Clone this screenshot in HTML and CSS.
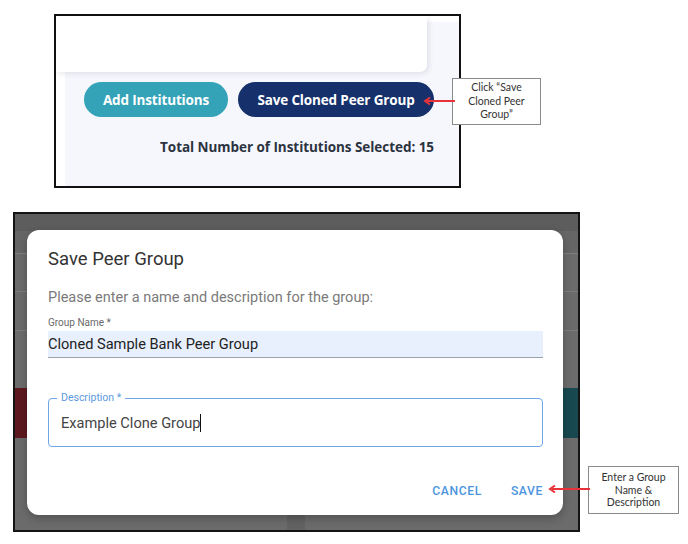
FILE: index.html
```html
<!DOCTYPE html>
<html>
<head>
<meta charset="utf-8">
<link rel="stylesheet" href="styles.css">
</head>
<body>
<div class="page">
  <div class="shot1">
    <div class="area">
      <div class="card"></div>
      <div class="btnrow">
        <div class="pill teal">Add Institutions</div>
        <div class="pill navy">Save Cloned Peer Group</div>
      </div>
      <div class="total">Total Number of Institutions Selected: 15</div>
    </div>
  </div>

  <div class="shot2">
    <div class="backdrop">
      <div class="band b1"></div>
      <div class="band b2"></div>
      <div class="band b3"></div>
      <div class="band b4"></div>
      <div class="band b5"></div>
      <div class="band b6"><div class="red"></div><div class="teal2"></div></div>
      <div class="band b7"><div class="chip"></div></div>
    </div>
    <div class="dialog">
      <div class="title">Save Peer Group</div>
      <div class="instr">Please enter a name and description for the group:</div>
      <div class="flabel">Group Name *</div>
      <div class="filled">Cloned Sample Bank Peer Group</div>
      <div class="outlined">
        <span class="olabel">Description *</span>
        <span class="otext">Example Clone Group</span><span class="caret"></span>
      </div>
      <div class="actions">
        <span class="tbtn">CANCEL</span>
        <span class="tbtn">SAVE</span>
      </div>
    </div>
  </div>

  <div class="callout c1">Click “Save<br>Cloned Peer<br>Group”</div>
  <svg class="arrow a1" width="32" height="10" viewBox="0 0 32 10"><line x1="4" y1="5" x2="32" y2="5" stroke="#e8323a" stroke-width="2"/><polyline points="7,1.5 2,5 7,8.5" fill="none" stroke="#e8323a" stroke-width="2"/></svg>
  <div class="callout c2">Enter a Group<br>Name &amp;<br>Description</div>
  <svg class="arrow a2" width="42" height="10" viewBox="0 0 42 10"><line x1="4" y1="5" x2="42" y2="5" stroke="#e8323a" stroke-width="2"/><polyline points="7,1.5 2,5 7,8.5" fill="none" stroke="#e8323a" stroke-width="2"/></svg>
</div>
</body>
</html>
```
FILE: styles.css
```css
* { box-sizing: border-box; }
html, body { margin: 0; padding: 0; background: #fff; }
.page { position: relative; width: 688px; height: 544px; display: flex; flex-direction: column; }

.shot1 {
  margin: 14px 0 0 54px;
  width: 407px;
  height: 174px;
  border: 2px solid #111;
  background: #fff;
  display: flex;
}
.area {
  flex: 1;
  margin: 6px 0 0 9px;
  background: #f6f7fc;
  display: flex;
  flex-direction: column;
}
.card {
  margin: -6px 0 0 -9px;
  width: 371px;
  height: 56px;
  background: #fff;
  border-radius: 0 0 7px 0;
  box-shadow: 2px 2px 5px rgba(40, 50, 90, 0.1);
}
.btnrow {
  display: flex;
  gap: 10px;
  margin: 10px 0 0 19px;
}
.pill {
  height: 35px;
  border-radius: 18px;
  color: #fff;
  font-family: "Open Sans", sans-serif;
  font-weight: 700;
  font-size: 13.5px;
  display: flex;
  align-items: center;
  justify-content: center;
  letter-spacing: -0.15px;
}
.pill.teal { width: 144px; background: #34a3b8; }
.pill.navy { width: 196px; background: #16306b; }
.total {
  align-self: flex-end;
  margin: 21px 25px 0 0;
  font-family: "Open Sans", sans-serif;
  font-weight: 700;
  font-size: 13.5px;
  line-height: 18px;
  color: #2b3340;
  letter-spacing: -0.05px;
}

.shot2 {
  position: relative;
  margin: 24px 0 0 13px;
  width: 567px;
  height: 320px;
  border: 2px solid #141414;
  overflow: hidden;
}
.backdrop { display: flex; flex-direction: column; height: 100%; background: #6a6a6a; }
.band { border-bottom: 1px solid #7e7e7e; }
.b1 { height: 17px; background: #5d5d5d; border-bottom: none; }
.b2 { height: 23px; background: #666; }
.b3 { height: 38px; background: #6b6b6b; }
.b4 { height: 39px; background: #6b6b6b; }
.b5 { height: 57px; background: #6c6c6c; border-bottom: none; }
.b6 { height: 50px; background: #6c6c6c; border-bottom: none; display: flex; justify-content: space-between; }
.red { width: 30px; background: #5e1920; }
.teal2 { width: 20px; background: #184950; }
.b7 { flex: 1; background: #6b6b6b; border-bottom: none; display: flex; align-items: flex-end; padding-left: 272px; }
.chip { width: 18px; height: 15px; background: #626262; }

.dialog {
  position: absolute;
  left: 12px;
  top: 16px;
  width: 536px;
  height: 285px;
  background: #fff;
  border-radius: 12px;
  box-shadow: 0 3px 8px rgba(0,0,0,0.25);
  display: flex;
  flex-direction: column;
  padding: 17px 20px 0 21px;
  font-family: Roboto, sans-serif;
}
.title { font-size: 18.5px; line-height: 24px; color: #333; }
.instr { margin-top: 17px; font-size: 14.5px; line-height: 20px; color: #7a7a7a; }
.flabel { margin-top: 9px; font-size: 10px; line-height: 12px; color: #6a6a6a; }
.filled {
  margin-top: 2px;
  height: 27px;
  background: #e8f0fe;
  border-bottom: 1px solid #9aa3ad;
  font-size: 14.6px;
  line-height: 27px;
  color: #222;
}
.outlined {
  position: relative;
  margin-top: 40px;
  height: 49px;
  border: 1.5px solid #6ea6e8;
  border-radius: 4px;
  display: flex;
  align-items: center;
  padding-left: 12px;
  font-size: 14.6px;
  color: #444;
}
.olabel {
  position: absolute;
  left: 8px;
  top: -8px;
  padding: 0 4px;
  background: #fff;
  font-size: 10.5px;
  line-height: 14px;
  color: #5b9be0;
}
.caret { display: inline-block; width: 1px; height: 18px; background: #111; }
.actions {
  margin-top: 34px;
  display: flex;
  justify-content: flex-end;
  gap: 29px;
}
.tbtn {
  font-size: 12.2px;
  font-weight: 500;
  line-height: 20px;
  letter-spacing: 0.6px;
  color: #4d95de;
}

.callout {
  position: absolute;
  background: #fff;
  border: 1px solid #8a8a8a;
  font-family: Lato, "Open Sans", sans-serif;
  color: #333;
  text-align: center;
  display: flex;
  align-items: center;
  justify-content: center;
}
.c1 { left: 452px; top: 78px; width: 89px; height: 47px; font-size: 10.5px; line-height: 13.5px; }
.c2 { left: 588px; top: 466px; width: 91px; height: 48px; font-size: 10.5px; line-height: 12.5px; }
.arrow { position: absolute; }
.a1 { left: 423px; top: 96px; }
.a2 { left: 548px; top: 484px; }
```
